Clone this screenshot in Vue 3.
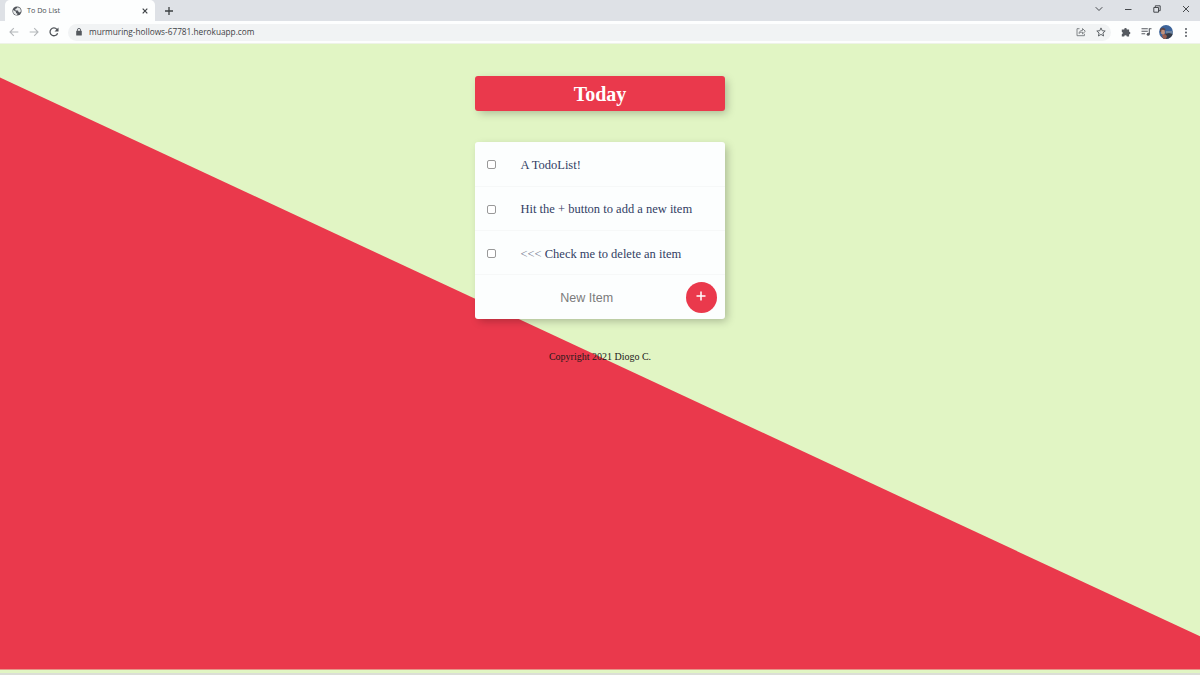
<script setup>
import { ref } from 'vue'

const items = ref([
  { mark: '', text: 'A TodoList!' },
  { mark: '', text: 'Hit the + button to add a new item' },
  { mark: '<<<', text: ' Check me to delete an item' },
])
</script>

<template>
  <div class="browser">
    <div class="tabs">
      <div class="tab">
        <svg class="globe" width="10" height="10" viewBox="0 0 20 20">
          <circle cx="10" cy="10" r="9.2" fill="#50545a" />
          <path d="M2.500 8 8 11.500 8 14 11 15.500 10 18.200A8 8 0 0 1 2.500 8M11 2.500 9 5 6.500 6 7 9 12 9 13 12 16 13 17.800 10.500A8 8 0 0 0 11 2.500" fill="#e8eaeb" />
        </svg>
        <span class="tab-title">To Do List</span>
        <svg class="close" width="6" height="6" viewBox="0 0 6 6"><path d="M.7.7l4.600 4.600M5.300.7.7 5.300" stroke="#3f4347" stroke-width="1.200" /></svg>
      </div>
      <svg class="new-tab" width="8" height="8" viewBox="0 0 8 8"><path d="M4 0v8M0 4h8" stroke="#3c4043" stroke-width="1.300" /></svg>
      <div class="window-controls">
        <svg width="8" height="8" viewBox="0 0 8 8"><path d="m.7 2.200 3.300 3.300 3.300-3.300" /></svg>
        <svg width="8" height="8" viewBox="0 0 8 8"><path d="M1 4.500h6.500" /></svg>
        <svg width="8" height="8" viewBox="0 0 8 8"><path d="M.8 2.500h4.700v4.700H.8zM2.300 2.500V.8h4.900v4.900H5.500" /></svg>
        <svg width="8" height="8" viewBox="0 0 8 8"><path d="m1 1 6 6M7 1 1 7" /></svg>
      </div>
    </div>
    <div class="toolbar">
      <svg class="nav" width="10" height="10" viewBox="0 0 10 10"><path d="M9.300 5H1M4.800 1.200 1 5l3.800 3.800" fill="none" stroke="#b4b7ba" stroke-width="1.100" /></svg>
      <svg class="nav" width="10" height="10" viewBox="0 0 10 10"><path d="M.7 5H9M5.200 1.200 9 5 5.200 8.800" fill="none" stroke="#b4b7ba" stroke-width="1.100" /></svg>
      <svg class="nav" width="10" height="10" viewBox="0 0 10 10"><path d="M8.600 6.200A3.900 3.900 0 1 1 7.900 2.300L9 3.400" fill="none" stroke="#505459" stroke-width="1.300" /><path d="M9.500.4v4H5.500z" fill="#505459" /></svg>
      <div class="address">
        <svg width="6" height="8" viewBox="0 0 6 8"><path d="M1.400 3V2a1.600 1.600 0 0 1 3.200 0v1" fill="none" stroke="#54585d" stroke-width=".9" /><rect x=".2" y="2.800" width="5.600" height="4.800" rx=".6" fill="#54585d" /></svg>
        <span class="url">murmuring-hollows-67781.herokuapp.com</span>
        <svg class="share" width="10" height="10" viewBox="0 0 10 10" fill="none" stroke="#74787c" stroke-width=".9"><path d="M3.500 1.700H1v7h7.400V6.800M3 6.500c.2-2 1.400-3 3.500-3.100V1.500l2.800 2.800-2.800 2.600V5.200C5 5.200 4 5.500 3 6.500Z" /></svg>
        <svg class="star" width="10" height="10" viewBox="0 0 10 10"><path d="m5 .9 1.200 2.800 3 .3-2.300 2 .7 3L5 7.400 2.400 9l.7-3-2.300-2 3-.3Z" fill="none" stroke="#5b5f64" stroke-width=".95" /></svg>
      </div>
      <svg class="puzzle" width="10" height="10" viewBox="0 0 10 10"><path d="M.8 2.400h2.400a1.300 1.300 0 1 1 2.600 0h2.300v2.400a1.250 1.250 0 1 1 0 2.500v2.300H5.800a1.300 1.300 0 0 0-2.600 0H.8V7.200a1.300 1.300 0 0 0 0-2.500Z" fill="#565a60" /></svg>
      <svg class="media" width="11" height="10" viewBox="0 0 11 10"><path d="M.5 1.800h6.300M.5 4.300h6.300M.5 6.800h3.700M8.300 7V1.800h2.200" fill="none" stroke="#565a60" stroke-width="1.100" /><circle cx="7.200" cy="7.300" r="1.500" fill="#565a60" /></svg>
      <svg class="avatar" width="14" height="14" viewBox="0 0 14 14">
        <clipPath id="face"><circle cx="7" cy="7" r="6.900" /></clipPath>
        <g clip-path="url(#face)">
          <path fill="#3d649a" d="M0 0h14v14H0z" />
          <path fill="#6c83a0" d="M7 6h7v3H7z" />
          <path fill="#353b47" d="M5 9l5-1 4 1v5H3z" />
          <path fill="#5b4546" d="M1 4l3-1.500L6.500 4 6 6 1 7z" />
          <path fill="#c1917b" d="m2.500 4.800 3 .2.500 3-1.500 2-2.500-1.500z" />
          <path fill="#995f51" d="m3 10 3-1 2 2-1 3H4z" />
        </g>
      </svg>
      <svg class="dots" width="2" height="9" viewBox="0 0 2 9" fill="#565a60"><circle cx="1" cy="1.100" r="1" /><circle cx="1" cy="4.500" r="1" /><circle cx="1" cy="7.900" r="1" /></svg>
    </div>

    <main class="page">
      <svg class="diagonal" viewBox="0 0 1200 626" preserveAspectRatio="none"><path d="M0 33.500 1200 592.800V626H0Z" fill="#ea394c" /></svg>
      <h1 class="heading">Today</h1>
      <div class="list">
        <label v-for="item in items" :key="item.text" class="item">
          <input type="checkbox" class="check" />
          <span class="label"><span class="mark">{{ item.mark }}</span>{{ item.text }}</span>
        </label>
        <form class="entry" @submit.prevent>
          <input class="new-item" type="text" placeholder="New Item" />
          <button class="add" aria-label="Add"><svg width="10" height="10" viewBox="0 0 10 10"><path d="M5 .5v9M.5 5h9" stroke="#fff" stroke-width="1.500" /></svg></button>
        </form>
      </div>
      <footer class="copyright">Copyright 2021 Diogo C.</footer>
    </main>
    <div class="bottom-edge"></div>
  </div>
</template>

<style>
body { margin: 0; overflow: hidden; }
</style>

<style scoped>
.browser { box-sizing: border-box; width: 1200px; height: 675px; display: flex; flex-direction: column; background: #e1f5c4; font-family: "Liberation Serif", serif; }
.browser * { box-sizing: border-box; }
.browser svg { display: block; flex: none; }
.tabs { height: 21px; flex: none; display: flex; align-items: center; background: #dee1e6; padding-left: 5px; }
.tab { height: 21px; width: 150px; display: flex; align-items: center; background: #fdfefe; border-radius: 5px 5px 0 0; padding: 0 7px; }
.tab-title { margin-left: 5px; padding-bottom: 2px; font: 7.200px/12px "Open Sans", sans-serif; color: #4b4f54; }
.close { margin-left: auto; }
.new-tab { margin-left: 10px; }
.window-controls { margin-left: auto; display: flex; gap: 21px; padding: 0 10px 3px 0; }
.window-controls path { fill: none; stroke: #46494d; stroke-width: 1; }
.toolbar { height: 23px; flex: none; display: flex; align-items: center; background: #fdfefe; padding: 0 0 0 9px; border-bottom: 1px solid #eef3e7; }
.nav { margin-right: 10px; }
.address { height: 17px; width: 1043px; display: flex; align-items: center; background: #f1f3f4; border-radius: 9px; margin-left: -1px; padding: 0 5px 0 8px; }
.url { margin-left: 7px; font: 8.280px/14px "Open Sans", sans-serif; color: #3e4246; white-space: nowrap; }
.share { margin-left: auto; }
.star { margin-left: 10px; }
.puzzle { margin-left: 10px; }
.media { margin-left: 10px; }
.avatar { margin-left: 7px; }
.dots { margin-left: 12px; }
.page { position: relative; height: 625.500px; flex: none; display: flex; flex-direction: column; align-items: center; padding-top: 31.600px; }
.diagonal { position: absolute; inset: 0; width: 100%; height: 100%; }
.heading { position: relative; width: 250px; height: 35.400px; margin: 0 0 31.300px; border-radius: 3px; background: #ea394c; box-shadow: 3px 3px 8px -1px rgba(0, 0, 0, .25); color: #fff; font-size: 20px; font-weight: 700; line-height: 37px; text-align: center; }
.list { position: relative; width: 250px; height: 177px; border-radius: 3px; background: #fcfefe; box-shadow: 3px 3px 8px -1px rgba(0, 0, 0, .25); }
.item { height: 44.400px; display: flex; align-items: center; border-bottom: 1px solid #f6f8f8; color: #324064; font-size: 12.500px; white-space: nowrap; }
.label { padding-top: 3px; }
.mark { color: #7c8494; }
.check { appearance: none; width: 9px; height: 9px; flex: none; margin: 1.500px 24.500px 0 12px; border: 1px solid #999; border-radius: 2px; background: #fff; }
.entry { height: 43.800px; display: flex; align-items: center; padding: 0 8.500px 0 12px; }
.new-item { width: 199px; height: 30px; border: 0; padding: 2px 0 0 1px; background: transparent; outline: 0; text-align: center; font: 12.500px "Liberation Sans", sans-serif; }
.new-item::placeholder { color: #7b7b7b; opacity: 1; }
.add { width: 31px; height: 31px; flex: none; display: flex; align-items: center; justify-content: center; margin-left: auto; padding: 0 0 3px; border: 0; border-radius: 50%; background: #ea394c; }
.copyright { position: relative; margin-top: 30.700px; color: #24191a; font-size: 10px; line-height: 14px; }
.bottom-edge { height: 2px; margin-top: auto; background: #dbdfd6; }
</style>
